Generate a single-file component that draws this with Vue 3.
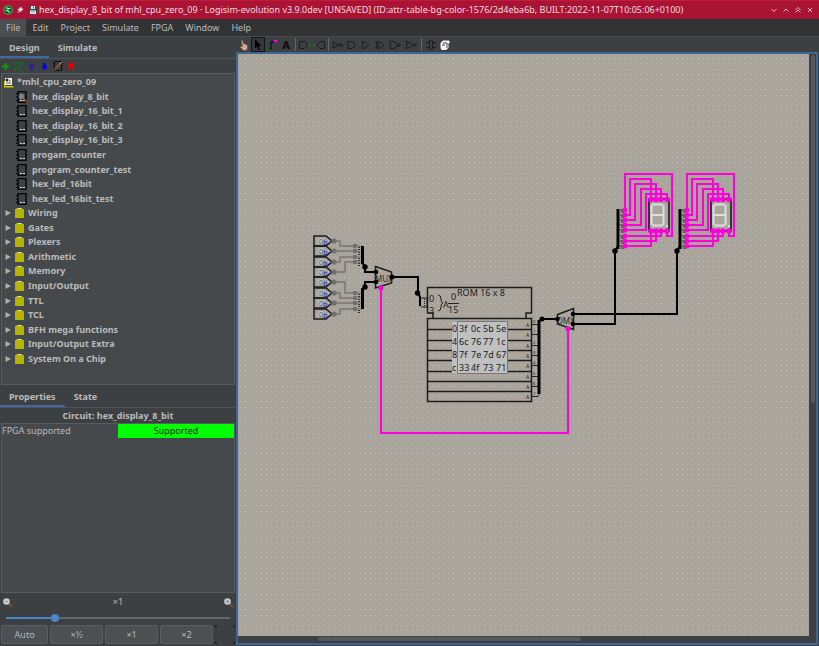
<script setup>
import { ref } from 'vue'

const menus = ['File', 'Edit', 'Project', 'Simulate', 'FPGA', 'Window', 'Help']
const circuits = [
  'hex_display_8_bit',
  'hex_display_16_bit_1',
  'hex_display_16_bit_2',
  'hex_display_16_bit_3',
  'progam_counter',
  'program_counter_test',
  'hex_led_16bit',
  'hex_led_16bit_test',
]
const libraries = [
  'Wiring', 'Gates', 'Plexers', 'Arithmetic', 'Memory', 'Input/Output',
  'TTL', 'TCL', 'BFH mega functions', 'Input/Output Extra', 'System On a Chip',
]
const zooms = ['Auto', '×½', '×1', '×2']
const zoom = ref(21)

const inputPins = [241, 251, 262, 272, 282, 293, 303, 314]
const splitterPins = [246, 251, 257, 262, 293, 298, 303, 309]
const bends = [340, 340, 340, 345, 345, 340, 340, 340]
const romRows = [329, 340, 350, 360, 371, 381, 391]
const romOutputs = [324, 334, 345, 355, 365, 376, 386, 396]
const romData = [
  ['0', '3f', '0c', '5b', '5e'],
  ['4', '6c', '76', '77', '1c'],
  ['8', '7f', '7e', '7d', '67'],
  ['c', '33', '4f', '73', '71'],
]
const columns = [452, 459, 471, 483, 496]
const rowBaselines = [332, 345, 358, 371]
const displayPins = [210, 215, 220, 225, 230, 236, 241, 246]
const segmentPins = [651, 656, 661, 667]
</script>

<template>
  <div class="app">
    <header class="titlebar">
      <svg class="logo" width="10" height="10" viewBox="0 0 10 10" aria-hidden="true">
        <circle cx="5" cy="5" r="4.4" fill="#0b5a20" stroke="#35b24a" />
        <path d="M2.5 3h2.5v4h2.5M2.5 5.500h2M5 3.500h2.500" stroke="#d6efd9" stroke-width=".9" fill="none" />
      </svg>
      <svg class="pin" width="7" height="8" viewBox="0 0 7 8" aria-hidden="true">
        <path d="M3.500 1l2.500 2.500-1.500.5-1 2-2.500-2.500 2-1zM2 5L.5 7" fill="#f0d5da" stroke="#f0d5da" stroke-width=".7" />
      </svg>
      <svg class="disk" width="8" height="8" viewBox="0 0 8 8" aria-hidden="true">
        <path d="M0 0h7l1 1v7H0z" fill="#3c4650" />
        <path d="M2 0h4v3H2zM1 4.500h6V8H1z" fill="#e5e9ec" />
        <path d="M4 .5h1v2H4z" fill="#3c4650" />
        <path d="M2 6h4" stroke="#6da3ce" />
      </svg>
      <h1>hex_display_8_bit of mhl_cpu_zero_09 · Logisim-evolution v3.9.0dev [UNSAVED] (ID:attr-table-bg-color-1576/2d4eba6b, BUILT:2022-11-07T10:05:06+0100)</h1>
      <div class="window-buttons">
        <button aria-label="Minimize"><svg width="6" height="6"><path d="M.5 2L3 4.500 5.500 2" /></svg></button>
        <button aria-label="Maximize"><svg width="6" height="6"><path d="M.5 4.500L3 2l2.500 2.500" /></svg></button>
        <button aria-label="Keep above"><svg width="6" height="6"><path d="M.5 3L3 .5 5.500 3M.5 5.500L3 3l2.500 2.500" /></svg></button>
        <button aria-label="Close"><svg width="6" height="6"><path d="M1 1l4 4M5 1L1 5" /></svg></button>
      </div>
    </header>

    <nav class="menubar">
      <button v-for="(m, i) in menus" :key="m" :class="{ active: i === 0 }">{{ m }}</button>
    </nav>

    <div class="workspace">
      <aside class="sidebar">
        <div class="tabs">
          <button class="selected">Design</button>
          <button>Simulate</button>
        </div>
        <div class="tree-tools">
          <button aria-label="Add circuit"><svg width="9" height="9"><path d="M4.500 1v7M1 4.500h7" stroke="#0a9e0a" stroke-width="2" /></svg></button>
          <button aria-label="Add VHDL"><svg width="9" height="10" fill="none" stroke="#0b7a12"><path d="M.5 0l1.500 4L3.500 0M5.500 0v4.500M8 0v4.500M5.500 2.500H8M1 5.500v4h1.500q2-2 0-4zM6 5v4.500h3" /></svg></button>
          <button aria-label="Move up"><svg width="9" height="9"><path d="M4.500 1L8 4.500H6V8H3V4.500H1z" fill="#25258c" /></svg></button>
          <button aria-label="Move down"><svg width="9" height="9"><path d="M4.500 8L8 4.500H6V1H3v3.500H1z" fill="#0000fa" /></svg></button>
          <button aria-label="Edit appearance"><svg width="10" height="10"><path d="M1.500 .5h7v9h-7z" fill="none" stroke="#111" /><path d="M0 2.500h10M0 5h10M0 7.500h10" stroke="#111" stroke-dasharray="1 8" /><path d="M1 9l7-7" stroke="#9b5530" stroke-width="1.500" /><path d="M7 3l2-2" stroke="#c8b0a0" /></svg></button>
          <button aria-label="Delete"><svg width="8" height="8"><path d="M1 1l6 6M7 1L1 7" stroke="#f00000" stroke-width="2" /></svg></button>
        </div>

        <section class="tree">
          <ul>
            <li class="root">
              <svg width="11" height="11" viewBox="0 0 11 11" aria-hidden="true">
                <path d="M1 4h1v5h8l.5 1.500H1z" fill="#d1ca13" />
                <path d="M2 1h7v7H2z" fill="#f3f3eb" />
                <path d="M3 2h2v2H3zM6 4h2M5 6h3M4 5v2" fill="#222" stroke="#222" stroke-width=".7" />
              </svg>
              <span>*mhl_cpu_zero_09</span>
            </li>
            <li v-for="(c, i) in circuits" :key="c" class="circuit">
              <svg width="12" height="12" viewBox="0 0 12 12" aria-hidden="true">
                <path d="M2 .5h8v11H2z" fill="#3e4143" stroke="#050505" stroke-width="1.300" />
                <path d="M0 2.500h2M0 6h2M0 9.500h2M10 2.500h1M10 6h1M10 9.500h1" stroke="#050505" />
                <path d="M4 9.500h5" stroke="#ddd" stroke-dasharray="2 1" />
                <g v-if="i === 0">
                  <circle cx="5.500" cy="5.500" r="2.700" fill="#7c8187" />
                  <path d="M7.500 7.500l4 4" stroke="#a54b16" stroke-width="1.500" />
                </g>
              </svg>
              <span>{{ c }}</span>
            </li>
            <li v-for="l in libraries" :key="l" class="library">
              <svg class="arrow" width="6" height="6" aria-hidden="true"><path d="M.5 0L6 3 .5 6z" fill="#adadad" /></svg>
              <svg class="folder" width="9" height="10" aria-hidden="true"><path d="M0 1h1l1-1h4l1 1h2v9H0z" fill="#b5b500" /><path d="M2 .5h5" stroke="#d9d7a0" /></svg>
              <span>{{ l }}</span>
            </li>
          </ul>
        </section>

        <div class="tabs lower">
          <button class="selected">Properties</button>
          <button>State</button>
        </div>
        <h2>Circuit: hex_display_8_bit</h2>
        <section class="properties">
          <table>
            <tbody>
              <tr>
                <th scope="row">FPGA supported</th>
                <td>Supported</td>
              </tr>
            </tbody>
          </table>
        </section>

        <div class="zoom-row">
          <button aria-label="Zoom out"><svg width="11" height="11"><path d="M7 7l3 3" stroke="#98501c" stroke-width="1.500" /><circle cx="4.500" cy="4.500" r="3.300" fill="#c9cccd" /><path d="M3 4.500h3" stroke="#888" /></svg></button>
          <label for="zoom">×1</label>
          <button aria-label="Zoom in"><svg width="11" height="11"><path d="M7 7l3 3" stroke="#98501c" stroke-width="1.500" /><circle cx="4.500" cy="4.500" r="3.300" fill="#c9cccd" /><path d="M3 4.500h3M4.500 3v3" stroke="#888" /></svg></button>
        </div>
        <input id="zoom" v-model="zoom" class="slider" type="range" min="0" max="100">
        <div class="zoom-buttons">
          <button v-for="z in zooms" :key="z">{{ z }}</button>
          <button class="fit" aria-label="Zoom to fit"><svg width="20" height="19"><path d="M0 3V1h2M18 1h2v2M0 16v2h2M18 18h2v-2" fill="none" stroke="#111" /></svg></button>
        </div>
      </aside>

      <main class="editor">
        <div class="toolbar">
          <button aria-label="Poke"><svg width="12" height="12"><path d="M3 1.500l1.500-.5 1 3.500L9.500 6v3l-1 2.500H5.500L2 8l.5-1 2 .5z" fill="#d3aa94" stroke="#5a443b" stroke-width=".6" /></svg></button>
          <button class="chosen" aria-label="Select"><svg width="12" height="12"><path d="M3 0l6.500 7H6.500l1.500 3.500-1.500.5L5 7.500 3 9.500z" fill="#000" /></svg></button>
          <button aria-label="Wiring"><svg width="12" height="12"><path d="M2 9.500h3V3H9" fill="none" stroke="#111" stroke-width="1.300" /><circle cx="9.500" cy="2" r="1.600" fill="#f0e" /><circle cx="2" cy="9.500" r="1.500" fill="#0b6a12" /></svg></button>
          <button class="letter" aria-label="Text">A</button>
          <i></i>
          <button aria-label="Input"><svg width="12" height="12"><path d="M.5 2.500h5L9 6 5.500 9.500h-5z" class="gate" /><path d="M9 6h3" stroke="#1d7a22" stroke-width="1.500" /></svg></button>
          <button aria-label="Output"><svg width="12" height="12"><path d="M11.500 2.500H7L3.500 6 7 9.500h4.500z" class="gate" /><path d="M0 6h3" stroke="#1d7a22" stroke-width="1.500" /></svg></button>
          <i></i>
          <button aria-label="NOT"><svg width="12" height="12"><path d="M1 3l6 3-6 3z" class="gate" /><circle cx="9" cy="6" r="1.300" class="gate" /></svg></button>
          <button aria-label="AND"><svg width="12" height="12"><path d="M2 2.500h3q4 0 4 3.500T5 9.500H2z" class="gate" /></svg></button>
          <button aria-label="OR"><svg width="12" height="12"><path d="M2 2.500q4 0 7 3.500-3 3.500-7 3.500 2-3.500 0-7z" class="gate" /></svg></button>
          <button aria-label="XOR"><svg width="12" height="12"><path d="M3.500 2.500q4 0 6 3.500-2 3.500-6 3.500 2-3.500 0-7zM2 2.500q2 3.500 0 7" class="gate" /></svg></button>
          <button class="wide" aria-label="NAND"><svg width="12" height="12"><path d="M1 2.500h3q4 0 4 3.500t-4 3.500H1z" class="gate" /><circle cx="10" cy="6" r="1.300" class="gate" /></svg></button>
          <button class="wide" aria-label="NOR"><svg width="12" height="12"><path d="M1 2.500q4 0 7 3.500-3 3.500-7 3.500 2-3.500 0-7z" class="gate" /><circle cx="10" cy="6" r="1.300" class="gate" /></svg></button>
          <i></i>
          <button aria-label="Edit layout"><svg width="12" height="12"><path d="M4.500 1.500h3v9h-3zM1 3.500h3M1 8.500h3M8 3.500h3M8 8.500h3" class="gate" /></svg></button>
          <button aria-label="Edit appearance"><svg width="12" height="12"><path d="M4 1.500h6l1 2-1.500 1V9L7 11H2.500l-1-2V4z" fill="#f3f3f3" /><path d="M4 4h4v5M3 6h3" stroke="#222" fill="none" stroke-width=".8" /></svg></button>
        </div>

        <div class="viewport">
          <svg class="canvas" role="img" aria-label="Circuit hex_display_8_bit">
            <defs>
              <pattern id="grid" x="16" y="6" width="26" height="26" patternUnits="userSpaceOnUse">
                <path
                  v-for="y in [0, 5, 11, 16, 21]" :key="y"
                  :d="`M0 ${y}h1v1h-1zM6 ${y}h1v1h-1zM11 ${y}h1v1h-1zM16 ${y}h1v1h-1zM21 ${y}h1v1h-1z`"
                  fill="#c2beb5"
                />
              </pattern>
            </defs>
            <g transform="translate(-238 -54)">
              <rect x="238" y="54" width="100%" height="100%" fill="url(#grid)" />

              <!-- input pins and their wires -->
              <g v-for="(y, i) in inputPins" :key="`in${y}`">
                <path :d="`M334 ${y}H${bends[i]}V${splitterPins[i]}H355`" class="bus-idle" />
                <path :d="`M314 ${y - 5}h12l6 5-6 5h-12z`" class="outline" />
                <circle cx="321" :cy="y" r="3" fill="#c4c4c4" />
                <text x="319" :y="y + 3" class="pin-value">0</text>
                <text x="323" :y="y + 4" class="pin-radix">b</text>
                <circle cx="334" :cy="y" r="2.600" fill="#6f6f6f" />
                <circle cx="355" :cy="splitterPins[i]" r="2.300" fill="#6f6f6f" />
                <path :d="`M357 ${splitterPins[i]}h5`" stroke="#6f6f6f" />
                <path :d="`M359 ${splitterPins[i] + 1}v3`" stroke="#333" stroke-width="2" stroke-dasharray="1 1" />
              </g>
              <path d="M362.500 246v18M362.500 288v21" class="bar" />
              <path d="M362.500 263l2.500 4v5h11M362.500 290l2.500-3v-5h11" class="wire" />
              <circle cx="365" cy="267" r="2.700" />
              <circle cx="365" cy="287" r="2.700" />

              <!-- multiplexer -->
              <path d="M375.500 266.500l16 5.500v11l-16 5z" class="outline" />
              <text x="375" y="282" class="mux">MUX</text>
              <path d="M392 277h26V293l2 4v9" class="wire" />
              <circle cx="376" cy="272" r="2.300" />
              <circle cx="376" cy="282" r="2.300" />
              <circle cx="392" cy="277" r="2.500" />
              <circle cx="417.500" cy="293" r="2.700" />
              <path d="M421 298h6M421 307h6M427 298v10" class="thin" />
              <path d="M424.500 299v8" class="thin" stroke-dasharray="1 1" />

              <!-- ROM -->
              <path d="M433 318.500V313h-5.500v-25.500h104V313H526v5.500" class="outline" />
              <path d="M427.500 318.500h104v83h-104z" class="outline" />
              <path v-for="y in romRows" :key="`row${y}`" :d="`M427 ${y + .5}h104`" class="outline" />
              <text x="457" y="296" class="label">ROM 16 x 8</text>
              <text x="429" y="302" class="label">0</text>
              <text x="429" y="314" class="label">3</text>
              <path d="M438 295q3 0 3 4t2 4q-2 0-2 4t-3 4" class="thin" />
              <text x="443" y="308" class="label">A</text>
              <text x="451" y="300" class="label">0</text>
              <path d="M448 303.500h11" class="thin" />
              <text x="448" y="313" class="label">15</text>
              <path d="M452 322h55v51h-55z" fill="#c0c0c0" />
              <path d="M457.500 321.500h50v52h-50z" fill="none" stroke="#777" />
              <g v-for="(row, r) in romData" :key="row[0]">
                <text v-for="(v, c) in row" :key="c" :x="columns[c]" :y="rowBaselines[r]" class="label">{{ v }}</text>
              </g>
              <g v-for="(y, i) in romOutputs" :key="`out${y}`">
                <path :d="`M531 ${y + .5}h7l1-2`" class="thin" />
                <text x="526" :y="y + 3" class="tiny">A</text>
                <text x="533" :y="y - 1" class="mini">{{ i }}</text>
              </g>
              <path d="M539 320v74" class="bar" />
              <path d="M539 321l3-2h15" class="wire" />
              <circle cx="542" cy="319" r="2.500" />

              <!-- demultiplexer -->
              <path d="M557.500 314.500l16-6v21l-16-5.500z" class="outline" />
              <text x="557" y="324" class="mux">DMX</text>
              <path d="M573 314h104v-63M573 324h42v-73" class="wire" />
              <circle cx="557.500" cy="319" r="2.300" />
              <circle cx="573" cy="314" r="2.300" />
              <circle cx="573" cy="324" r="2.300" />

              <path d="M381 288v145h187V329" class="floating" />
              <circle cx="381" cy="288" r="2.500" class="node" />
              <circle cx="568" cy="329" r="2.500" class="node" />

              <!-- seven segment displays -->
              <g v-for="dx in [0, 62]" :key="`seg${dx}`" :transform="`translate(${dx} 0)`">
                <path d="M618 209v40" class="bar" />
                <path d="M618 246l-3 5" class="wire" />
                <circle cx="615" cy="251" r="2.700" />
                <path v-for="y in displayPins" :key="y" :d="`M620 ${y}h5M621 ${y + 2}h3`" class="thin" />
                <path d="M649 199h20v32h-20z" fill="#aaa69e" stroke="#111" stroke-width="1.500" />
                <path d="M652 204.500h11M652 215h11M652 225.500h11M651.500 205v20M663.500 205v20" stroke="#dedede" stroke-width="2" fill="none" />
                <path d="M666 225h2v2h-2z" fill="#dedede" />
                <path
                  d="M625 210v-36h47v62h-5v-6M625 215h5v-36h21v20M625 220h10v-36h21v15M625 225h16v-36h20v10M625 230h21v-36h21v5M625 236h36v-6M625 241h31v-11M625 246h26v-16"
                  class="floating"
                />
                <circle v-for="y in displayPins" :key="`n${y}`" cx="625" :cy="y" r="2.500" class="node" />
                <circle v-for="x in segmentPins" :key="`t${x}`" :cx="x" cy="199.500" r="2.700" class="node" />
                <circle v-for="x in segmentPins" :key="`b${x}`" :cx="x" cy="231" r="2.700" class="node" />
              </g>
            </g>
          </svg>
          <div class="scroll vertical"><span></span></div>
          <div class="scroll horizontal"><span></span></div>
        </div>
      </main>
    </div>
  </div>
</template>

<style>
body {
  background: #3c4043;
}
</style>

<style scoped>
.app {
  display: flex;
  flex-direction: column;
  height: 100vh;
  overflow: hidden;
  background: #3c4043;
  color: #bbb;
  font: 9px/14px "Noto Sans", sans-serif;
}
button {
  display: flex;
  align-items: center;
  justify-content: center;
  margin: 0;
  padding: 0;
  border: 0;
  background: none;
  color: inherit;
  font: inherit;
}
svg {
  display: block;
  flex: none;
}
.titlebar {
  display: flex;
  align-items: center;
  height: 19px;
  padding: 0 6px 0 3px;
  background: #a91434;
  color: #f2dce0;
  box-sizing: border-box;
  border-top: 1px solid #c2183c;
}
.pin { margin-left: 4px; }
.disk { margin: 0 2px 0 5px; }
h1 {
  flex: 1;
  margin: 0;
  font-size: 9px;
  font-weight: 400;
  white-space: nowrap;
}
.window-buttons {
  display: flex;
  gap: 6px;
}
.window-buttons path {
  fill: none;
  stroke: #e8b9c4;
}
.menubar {
  display: flex;
  height: 18px;
  box-sizing: border-box;
  background: #313335;
  border-bottom: 1px solid #4a4d50;
}
.menubar button { padding: 0 6px; }
.menubar .active { background: #4a4e51; }
.workspace {
  display: flex;
  flex: 1;
  min-height: 0;
}
.sidebar {
  display: flex;
  flex-direction: column;
  width: 236px;
  flex: none;
}
.tabs {
  display: flex;
  height: 21px;
  border-bottom: 1px solid #515457;
  font-weight: 700;
}
.tabs button {
  padding: 2px 9px 0;
  border-bottom: 2px solid transparent;
}
.tabs .selected { border-bottom-color: #41689c; }
.tree-tools {
  display: flex;
  align-items: center;
  gap: 4px;
  height: 14px;
  padding: 0 1px;
}
.tree {
  flex: 1 1 312px;
  margin: 0 1px;
  padding-top: 1px;
  border: 1px solid #5a5d5f;
  background: #45494b;
  box-sizing: border-box;
  min-height: 0;
}
ul {
  display: grid;
  grid-auto-rows: 1fr;
  height: 291px;
  margin: 0;
  padding: 0;
  list-style: none;
  font-weight: 700;
}
li {
  display: flex;
  align-items: center;
}
.root { padding-left: 1px; gap: 3px; }
.circuit { padding-left: 14px; gap: 4px; }
.library { padding-left: 3px; }
.folder { margin: 0 4px; }
.tabs.lower {
  height: 20px;
  margin-top: 2px;
}
h2 {
  margin: 0;
  font-size: 9px;
  line-height: 15px;
  text-align: center;
}
.properties {
  flex: 1 1 170px;
  margin: 0 1px;
  border: 1px solid #5a5d5f;
  background: #45494b;
  box-sizing: border-box;
}
table {
  width: 100%;
  border-collapse: collapse;
  table-layout: fixed;
}
th, td {
  padding: 0;
  font-weight: 400;
}
th { text-align: left; }
td {
  background: #0f0;
  color: #222;
  text-align: center;
}
.zoom-row {
  display: flex;
  align-items: center;
  justify-content: space-between;
  height: 18px;
  padding: 0 2px;
}
.slider {
  appearance: none;
  height: 14px;
  margin: 0 6px;
  background: linear-gradient(90deg, #4a88c7 22%, #64676a 22%) center / 100% 2px no-repeat;
}
.slider::-webkit-slider-thumb {
  appearance: none;
  width: 8px;
  height: 8px;
  border-radius: 50%;
  background: #4a88c7;
}
.zoom-buttons {
  display: flex;
  gap: 2px;
  padding: 0 1px 2px;
}
.zoom-buttons button {
  flex: 53;
  height: 19px;
  border: 1px solid #5b5e60;
  border-radius: 2px;
  background: #4c5052;
}
.zoom-buttons button:first-child { flex: 47; }
.zoom-buttons .fit {
  flex: none;
  width: 20px;
  border: 0;
  background: none;
}
.editor {
  display: flex;
  flex-direction: column;
  flex: 1;
  min-width: 0;
  padding: 0 1px 1px 0;
}
.toolbar {
  display: flex;
  align-items: center;
  gap: 2px;
  height: 15px;
  padding-left: 2px;
}
.toolbar button {
  width: 12px;
  height: 13px;
}
.toolbar button.wide { width: 14px; }
.toolbar .chosen { outline: 1px solid #141414; background: #34373a; }
.toolbar .letter {
  color: #080808;
  font-size: 11px;
  font-weight: 700;
}
.toolbar i {
  width: 1px;
  height: 13px;
  background: #66696b;
  margin: 0 1px;
}
.gate {
  fill: none;
  stroke: #1b1d1e;
}
.viewport {
  display: grid;
  grid-template-columns: 1fr 7px;
  grid-template-rows: 1fr 7px;
  flex: 1;
  min-height: 0;
  border: 2px solid #3f6595;
  background: #3c4043;
}
.canvas {
  width: 100%;
  height: 100%;
  background: #aaa59c;
}
.scroll span {
  display: block;
  background: #56595b;
  border-radius: 2px;
}
.vertical { padding: 1px 1px 1px 2px; }
.vertical span { height: 60%; }
.horizontal { padding: 1px 0; }
.horizontal span {
  width: 46%;
  height: 4px;
  margin-left: 14%;
}
.outline { fill: none; stroke: #1c1c1c; stroke-width: 1.5; }
.thin { fill: none; stroke: #222; }
.wire { fill: none; stroke: #000; stroke-width: 2; }
.bar { stroke: #000; stroke-width: 3; }
.bus-idle { fill: none; stroke: #77756f; stroke-width: 1.5; }
.floating { fill: none; stroke: #f0d; stroke-width: 2; }
.node { fill: #f0d; }
.label { font-size: 9px; fill: #1c1c1c; }
.mux { font-size: 8px; fill: #2a2a2a; }
.tiny { font-size: 5px; fill: #111; }
.mini { font-size: 4px; fill: #111; }
.pin-value { font-size: 7px; fill: #555; }
.pin-radix { font-size: 7px; fill: #1717d8; }
</style>
